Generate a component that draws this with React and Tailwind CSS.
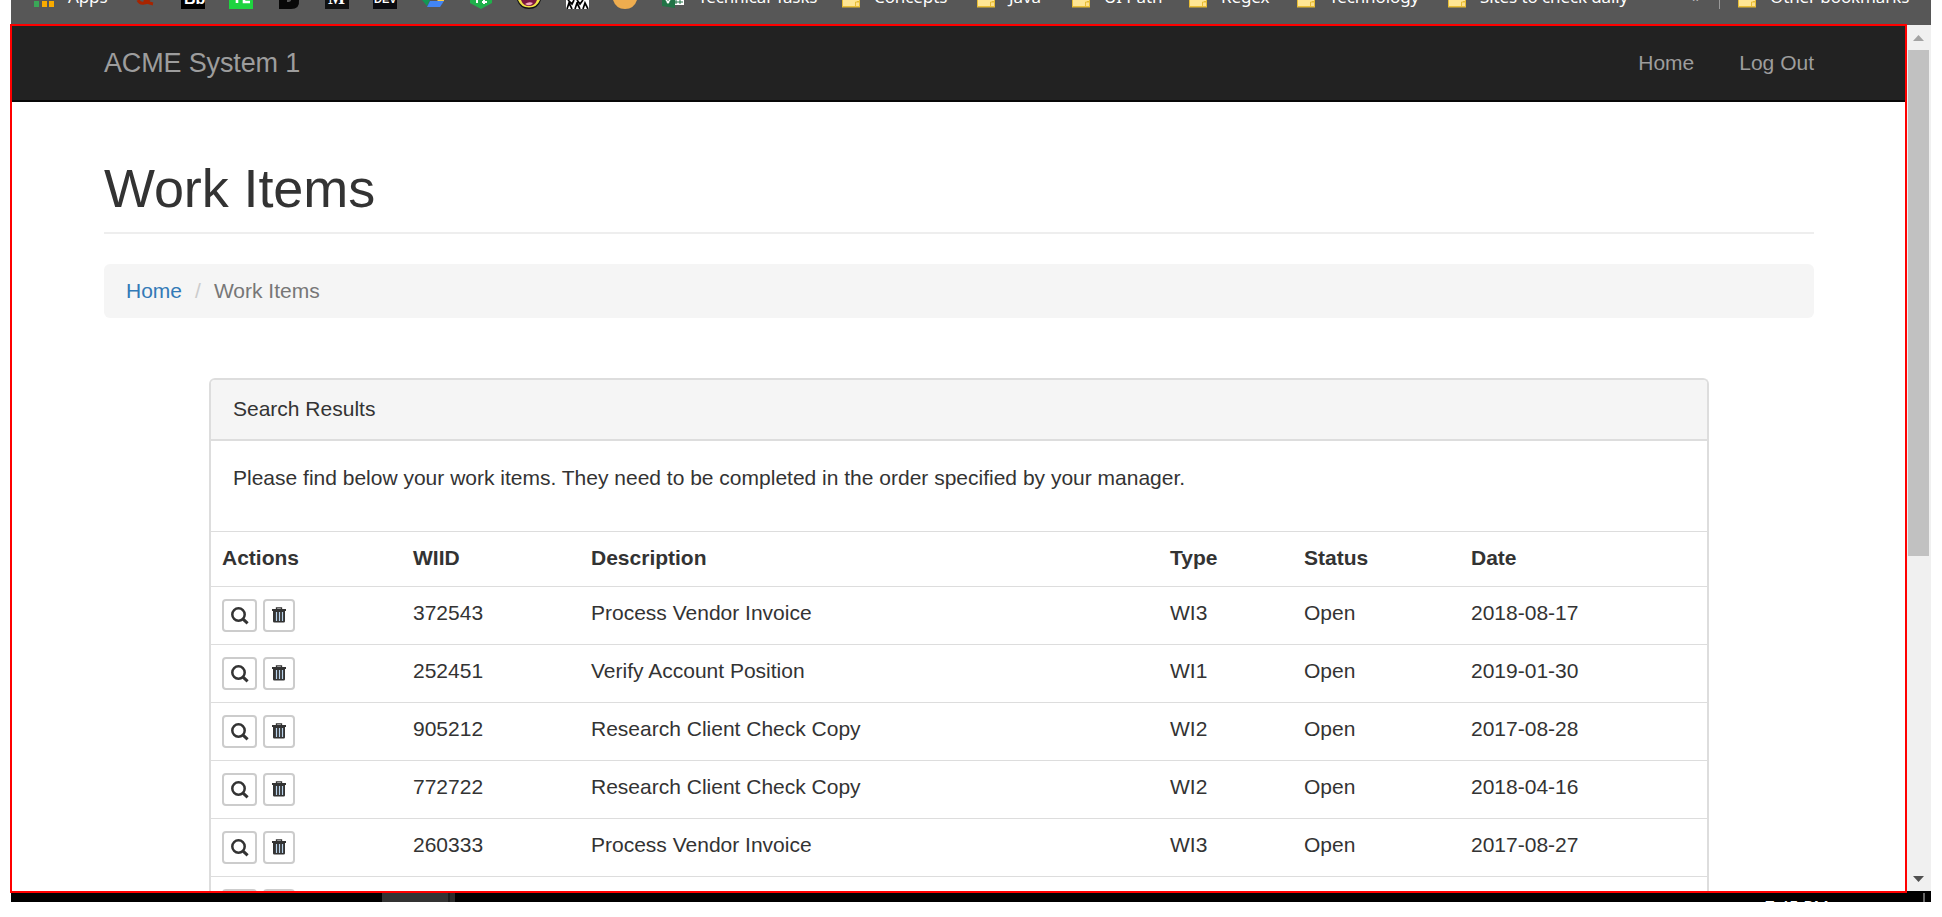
import React from "react";

const rows = [
  ["372543", "Process Vendor Invoice", "WI3", "Open", "2018-08-17"],
  ["252451", "Verify Account Position", "WI1", "Open", "2019-01-30"],
  ["905212", "Research Client Check Copy", "WI2", "Open", "2017-08-28"],
  ["772722", "Research Client Check Copy", "WI2", "Open", "2018-04-16"],
  ["260333", "Process Vendor Invoice", "WI3", "Open", "2017-08-27"],
  ["", "", "", "", ""],
];

const COLS = "grid grid-cols-[191px_178px_579px_134px_167px_247px]";

function SearchIcon() {
  return (
    <svg className="block h-[18px] w-[18px] shrink-0" viewBox="0 0 18 18" fill="none" stroke="#333">
      <circle cx="7.5" cy="7.500" r="6.200" strokeWidth="2.500" />
      <path d="M11.800 11.800 16.600 16.300" strokeWidth="3" />
    </svg>
  );
}

function TrashIcon() {
  return (
    <svg className="block h-4 w-3.5 shrink-0" viewBox="0 0 14 16">
      <path d="M4.500 2V.8h5V2" fill="none" stroke="#333" strokeWidth="1.300" />
      <path d="M0 2h14v2H0zM1 4h12v10.200q0 1.300-1.300 1.300H2.300Q1 15.500 1 14.200z" fill="#333" />
      <path d="M4.500 5v9M7.500 5v9M10.500 5v9" stroke="#b9d2ea" strokeWidth="1.200" />
    </svg>
  );
}

function ActionButtons() {
  return (
    <div className="flex gap-1.5">
      <div className="flex h-[33px] w-[35px] justify-center rounded-[4px] border-2 border-[#ccc] bg-white pt-[6px]"><SearchIcon /></div>
      <div className="flex h-[33px] w-8 justify-center rounded-[4px] border-2 border-[#ccc] bg-white pt-[6px]"><TrashIcon /></div>
    </div>
  );
}

function FolderIcon() {
  return (
    <svg className="mr-[14px] block h-2 w-[18px] shrink-0" viewBox="0 0 18 8">
      <path d="M0 0h18v7.500H0z" fill="#e8bd35" />
      <path d="M1 0h16v1h-2v5H1z" fill="#ffe694" />
      <path d="M14 2h3v4h-3z" fill="#ffe08a" />
      <path d="M13.500 6V2h3.500" fill="none" stroke="#e8bd35" />
    </svg>
  );
}

function SheetIcon() {
  return (
    <svg className="mr-[14px] block h-2 w-[22px] shrink-0" viewBox="0 0 22 8">
      <path d="M12 0h10v5H12z" fill="#fff" />
      <path d="M14 0v4M18 0v4M13 2h8" stroke="#217346" />
      <path d="M0 0h13v8L0 6z" fill="#217346" />
      <path d="M4 0l3 3M8 0L5 3" stroke="#fff" strokeWidth="1.500" />
    </svg>
  );
}

function Favicons() {
  return (
    <svg className="block h-[9px] w-[636px] shrink-0" viewBox="0 0 636 9">
      <g transform="translate(-11 0)">
        <path d="M34 1h5v6h-5z" fill="#3aa757" />
        <path d="M42 1h5v6h-5zM49 1h5v6h-5z" fill="#f9ab00" />
        <path d="M138 0q2 4 6 3 4 0 5-3M144 0q4 3 9 4" fill="none" stroke="#a82400" strokeWidth="3" />
        <path d="M181 0h24v9h-24z" fill="#000" />
        <text x="184" y="3.500" fontSize="16" fontWeight="700" fill="#fff" fontFamily="Liberation Sans, sans-serif">Bb</text>
        <path d="M229 0h24v9h-24z" fill="#1ed43f" />
        <path d="M237 0v3M244 0v2h6" stroke="#fff" strokeWidth="2.600" fill="none" />
        <path d="M279 0h20q1 9-8 9h-12z" fill="#080808" />
        <path d="M287 0h4q0 2-4 2z" fill="#575757" />
        <path d="M325 0h24v9h-24z" fill="#111" />
        <text x="328" y="3.500" fontSize="18" fontWeight="700" fill="#fff" fontFamily="Liberation Serif, serif">M</text>
        <path d="M373 0h24v9h-24z" fill="#0a0a0f" />
        <text x="374" y="3" fontSize="11" fontWeight="700" fill="#fff" fontFamily="Liberation Sans, sans-serif">DEV</text>
        <path d="M422 0h8l-3 6z" fill="#149653" />
        <path d="M430 1h14l-4 6h-13z" fill="#4285f4" />
        <path d="M437 0h7v1h-6z" fill="#ffce46" />
        <path d="M470 0h22v3l-11 6-11-6z" fill="#20b04b" />
        <path d="M477 0v3M484 0v4M482 2h5" stroke="#fff" strokeWidth="2" />
        <path d="M517 0h24q-3 9-12 9t-12-9z" fill="#111" />
        <path d="M518 0h22q-3 7.500-11 7.500T518 0z" fill="#f3e545" />
        <path d="M521 0h16q-2 6-8 6t-8-6z" fill="#7b173f" />
        <path d="M525 4q4-3 8-1-3 4-8 1z" fill="#f7a8bd" />
        <path d="M566 0h23v9h-23z" fill="#fff" />
        <path d="M567 9l2-6 3 6M575 9l2-6 3 6M583 9l2-6 3 6M568 0l4 4 2-4M577 0l3 4 3-4" stroke="#000" strokeWidth="1.700" fill="none" />
        <path d="M613 0h24q-3 9-12 9t-12-9z" fill="#efad4f" />
      </g>
    </svg>
  );
}

function Bookmark({ width, label, sheet }) {
  return (
    <div className="flex shrink-0" style={{ width }}>
      {sheet ? <SheetIcon /> : <FolderIcon />}
      <BarLabel label={label} />
    </div>
  );
}

function BarLabel({ label }) {
  return (
    <span className="-mt-[15px] block h-6 text-[17px] leading-6 tracking-[-0.1px] whitespace-nowrap text-white">
      {label}
    </span>
  );
}

function BookmarksBar() {
  return (
    <div className="relative ml-[11px] flex h-6 w-[1920px] shrink-0 overflow-hidden bg-[#575757] font-['Noto_Sans',sans-serif]">
      <Favicons />
      <div className="absolute top-0 left-[57px]"><BarLabel label="Apps" /></div>
      <div className="ml-[15px] flex">
        <Bookmark sheet width={180} label="Technical Tasks" />
        <Bookmark width={135} label="Concepts" />
        <Bookmark width={95} label="Java" />
        <Bookmark width={117} label="UI Path" />
        <Bookmark width={108} label="Regex" />
        <Bookmark width={151} label="Technology" />
        <Bookmark width={244} label="Sites to check daily" />
      </div>
      <div className="-mt-[17px] h-6 w-[27px] shrink-0 text-[18px] leading-6 text-[#ccc]">»</div>
      <div className="mr-[18px] h-[9px] w-px shrink-0 bg-[#999]" />
      <Bookmark width={180} label="Other bookmarks" />
    </div>
  );
}

function Scrollbar() {
  return (
    <div className="flex h-[869px] w-6 shrink-0 flex-col border-t border-b-2 border-t-[#575757] border-b-black bg-[#f0f0f0]">
      <svg className="block h-[25px] w-6 shrink-0" viewBox="0 0 24 25"><path d="M6 16l5.500-6 5.500 6z" fill="#a3a3a3" /></svg>
      <div className="ml-px h-[506px] w-[21px] bg-[#c1c1c1]" />
      <svg className="mt-auto block h-6 w-6 shrink-0" viewBox="0 0 24 24"><path d="M6 9h11l-5.500 6z" fill="#505050" /></svg>
    </div>
  );
}

function Taskbar() {
  return (
    <div className="ml-[11px] flex h-[9px] w-[1920px] shrink-0 overflow-hidden bg-black">
      <div className="ml-[371px] h-full w-[66px] bg-[#333]" />
      <div className="h-full w-0.5 bg-[#1c1c1c]" />
      <div className="h-full w-[5px] bg-[#2a2a2a]" />
      <div className="mt-[2px] ml-[1310px] w-[70px] text-[17px] leading-6 whitespace-nowrap text-white font-['Noto_Sans',sans-serif]">7:45 PM</div>
      <div className="ml-[88px] h-full w-0.5 bg-[#666]" />
    </div>
  );
}

function WorkItems() {
  return (
    <div className="mx-[197px] mt-[60px] box-border w-[1500px] self-start rounded-t-[6px] border-2 border-b-0 border-[#ddd]">
      <div className="h-[61px] rounded-t-[4px] border-b-2 border-[#ddd] bg-[#f5f5f5] pt-[14px] pl-[22px] leading-[30px]">Search Results</div>
      <div className="h-[90px] pt-[22px] pl-[22px] leading-[30px]">
        Please find below your work items. They need to be completed in the order specified by your manager.
      </div>
      <div className={`${COLS} h-[55px] border-t border-[#ddd] pt-[11px] pl-[11px] leading-[30px] font-bold`}>
        <div>Actions</div><div>WIID</div><div>Description</div><div>Type</div><div>Status</div><div>Date</div>
      </div>
      {rows.map((r, i) => (
        <div key={i} className={`${COLS} h-[58px] border-t border-[#ddd] pt-[11px] pl-[11px] leading-[30px]`}>
          <div className="pt-px"><ActionButtons /></div>
          {r.map((c, j) => <div key={j}>{c}</div>)}
        </div>
      ))}
    </div>
  );
}

export default function App() {
  return (
    <div className="flex h-[917px] w-[1942px] flex-col overflow-hidden bg-white">
      <BookmarksBar />
      <div className="flex h-[869px] shrink-0">
        <div className="ml-[10px] flex h-[869px] w-[1897px] shrink-0 flex-col overflow-hidden border-2 border-[#f00] bg-white font-['Liberation_Sans',Arial,sans-serif] text-[21px] text-[#333]">
          <div className="flex h-[76px] shrink-0 items-center justify-between border-b-2 border-[#080808] bg-[#222] pr-[91px] pl-[92px] text-[#9d9d9d]">
            <div className="text-[27px] tracking-[-0.15px]">ACME System 1</div>
            <div className="flex gap-[45px]"><span>Home</span><span>Log Out</span></div>
          </div>
          <h1 className="mx-[92px] mt-[56px] h-[76px] w-[1710px] shrink-0 border-b-2 border-[#eee] text-[54px] leading-[60px] tracking-[-0.1px]">Work Items</h1>
          <div className="mx-[92px] mt-[30px] flex h-[54px] w-[1710px] shrink-0 items-center rounded-[6px] bg-[#f5f5f5] px-[22px]">
            <span className="text-[#337ab7]">Home</span>
            <span className="mr-[13px] ml-[13px] text-[#ccc]">/</span>
            <span className="text-[#777]">Work Items</span>
          </div>
          <WorkItems />
        </div>
        <Scrollbar />
      </div>
      <Taskbar />
    </div>
  );
}
